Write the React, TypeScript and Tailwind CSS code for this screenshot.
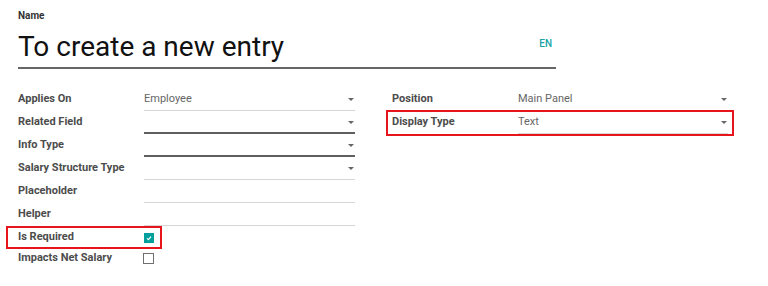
import type { ReactNode } from "react";

const font = { fontFamily: "Roboto, 'Liberation Sans', sans-serif" };

function Caret() {
  return (
    <span className="ml-auto mr-[1px] h-0 w-0 border-x-[3px] border-t-[3px] border-x-transparent border-t-[#666]" />
  );
}

type FieldProps = {
  label: string;
  value?: string;
  select?: boolean;
  strong?: boolean;
  boxed?: boolean;
};

function FieldRow({ label, value, select, strong, boxed }: FieldProps) {
  return (
    <div className="relative flex h-[23px] items-center">
      {boxed && (
        <span className="pointer-events-none absolute -left-[6px] -right-[6px] -top-[1px] -bottom-[2px] border-2 border-[#e8141b]" />
      )}
      <div className="w-[126px] shrink-0 text-[11px] font-bold text-[#4c4c4c]">{label}</div>
      <div
        className={
          "flex h-full flex-1 items-center pt-[1px] " +
          (strong ? "border-b-2 border-[#5f5f5f]" : "border-b border-[#d6d6d6]")
        }
      >
        <span className="text-[11px] text-[#666]">{value}</span>
        {select && <Caret />}
      </div>
    </div>
  );
}

function CheckRow({ label, checked, boxed }: { label: string; checked?: boolean; boxed?: boolean }) {
  return (
    <div className="relative flex h-[21px] items-center">
      {boxed && (
        <span className="pointer-events-none absolute -left-[12px] -top-[1px] -bottom-[1px] w-[156px] border-2 border-[#e8141b]" />
      )}
      <div className="w-[126px] shrink-0 text-[11px] font-bold text-[#4c4c4c]">{label}</div>
      {checked ? (
        <span className="flex h-[10px] w-[10px] items-center justify-center bg-[#01a09d]">
          <svg viewBox="0 0 10 10" className="h-[10px] w-[10px]">
            <path d="M3 5.4 L4.4 6.6 L7 3.6" fill="none" stroke="white" strokeWidth="1.2" />
          </svg>
        </span>
      ) : (
        <span className="-ml-[1px] h-[11px] w-[11px] border-[1.5px] border-[#707070] bg-white" />
      )}
    </div>
  );
}

function Column({ children, className }: { children: ReactNode; className?: string }) {
  return <div className={"flex flex-col " + (className ?? "")}>{children}</div>;
}

export default function App() {
  return (
    <div className="h-[286px] w-[768px] bg-white pl-[18px] pt-[10px]" style={font}>
      <div className="text-[10px] font-bold leading-[12px] text-[#333]">Name</div>
      <div className="mt-[9px] flex h-[38px] w-[538px] items-start border-b-2 border-[#666]">
        <span className="text-[28px] leading-[32px] text-[#111]">To create a new entry</span>
        <span className="ml-auto mr-[4px] mt-[5px] text-[10px] font-medium text-[#1aa3a8]">EN</span>
      </div>

      <div className="mt-[19px] flex">
        <Column className="w-[337px]">
          <FieldRow label="Applies On" value="Employee" select />
          <FieldRow label="Related Field" select strong />
          <FieldRow label="Info Type" select strong />
          <FieldRow label="Salary Structure Type" select />
          <FieldRow label="Placeholder" />
          <FieldRow label="Helper" />
          <div className="mt-[1px]">
            <CheckRow label="Is Required" checked boxed />
            <CheckRow label="Impacts Net Salary" />
          </div>
        </Column>
        <Column className="ml-[37px] w-[336px]">
          <FieldRow label="Position" value="Main Panel" select />
          <FieldRow label="Display Type" value="Text" select boxed />
        </Column>
      </div>
    </div>
  );
}
